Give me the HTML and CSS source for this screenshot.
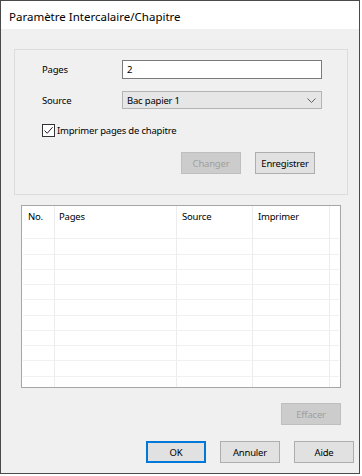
FILE: index.html
```html
<!DOCTYPE html>
<html lang="fr">
<head>
    <meta charset="UTF-8">
    <title>Paramètre Intercalaire/Chapitre</title>
    <link rel="stylesheet" href="styles.css">
</head>
<body>

<div class="window">
    <div class="titlebar">Paramètre Intercalaire/Chapitre</div>

    <div class="content">
        <div class="group">
            <div class="field-row">
                <label class="field-label" for="pages">Pages</label>
                <input class="text-input" type="text" id="pages" value="2">
            </div>
            <div class="field-row source-row">
                <span class="field-label">Source</span>
                <div class="select">
                    <span>Bac papier 1</span>
                    <svg class="chevron" width="9" height="5" viewBox="0 0 9 5">
                        <path d="M0.5 0.5 L4.5 4.5 L8.5 0.5" fill="none" stroke="#606060" stroke-width="1"/>
                    </svg>
                </div>
            </div>
            <div class="check-row">
                <span class="checkbox">
                    <svg width="11" height="11" viewBox="0 0 11 11">
                        <path d="M1.5 5.5 L4.2 8.3 L9.6 2.2" fill="none" stroke="#222" stroke-width="1"/>
                    </svg>
                </span>
                <span>Imprimer pages de chapitre</span>
            </div>
            <div class="button-row">
                <button class="btn" disabled>Changer</button>
                <button class="btn">Enregistrer</button>
            </div>
        </div>

        <div class="list">
            <div class="list-row list-head">
                <div class="cell c-no">No.</div>
                <div class="cell c-pages">Pages</div>
                <div class="cell c-source">Source</div>
                <div class="cell c-print">Imprimer</div>
                <div class="cell c-rest"></div>
            </div>
            <div id="listBody"></div>
        </div>

        <div class="clear-row">
            <button class="btn" disabled>Effacer</button>
        </div>
    </div>

    <div class="footer">
        <button class="btn btn-default">OK</button>
        <button class="btn">Annuler</button>
        <button class="btn">Aide</button>
    </div>
</div>

<script>
    // Empty rows of the list view
    var listBody = document.getElementById('listBody');
    for (var i = 0; i < 11; i++) {
        var row = document.createElement('div');
        row.className = 'list-row';
        row.innerHTML = '<div class="cell c-no"></div><div class="cell c-pages"></div>' +
            '<div class="cell c-source"></div><div class="cell c-print"></div><div class="cell c-rest"></div>';
        listBody.appendChild(row);
    }
</script>

</body>
</html>
```

FILE: styles.css
```css
body {
    margin: 0;
    padding: 0;
    background: #ffffff;
    font-family: "Noto Sans", "Open Sans", sans-serif;
    font-size: 9.5px;
    letter-spacing: -0.2px;
    color: #000;
}

.window {
    width: 360px;
    height: 474px;
    box-sizing: border-box;
    border: 1px solid #4a4a4a;
    background-color: #f0f0f0;
    display: flex;
    flex-direction: column;
}

.titlebar {
    height: 28px;
    box-sizing: border-box;
    background: #fff;
    padding: 3px 0 0 8px;
    font-size: 11.5px;
    letter-spacing: 0;
    line-height: 25px;
}

.content {
    padding: 20px 11px 0 13px;
    display: flex;
    flex-direction: column;
}

.group {
    border: 1px solid #dcdcdc;
    padding: 10px 25px 20px 27px;
}

.field-row {
    display: flex;
    align-items: center;
}

.source-row {
    margin-top: 12px;
}

.field-label {
    width: 80px;
}

.text-input {
    width: 200px;
    height: 19px;
    box-sizing: border-box;
    border: 1px solid #7a7a7a;
    background: #fff;
    font: inherit;
    letter-spacing: inherit;
    padding: 0 4px;
    margin: 0;
    outline: none;
}

.select {
    width: 200px;
    height: 18px;
    box-sizing: border-box;
    border: 1px solid #b4b4b4;
    background: #e6e6e6;
    display: flex;
    align-items: center;
    justify-content: space-between;
    padding: 0 5px 0 4px;
}

.check-row {
    margin-top: 15px;
    display: flex;
    align-items: center;
    gap: 2px;
    height: 13px;
}

.checkbox {
    width: 13px;
    height: 13px;
    box-sizing: border-box;
    border: 1px solid #333;
    background: #fff;
    display: flex;
}

.button-row {
    margin: 15px 7px 0 0;
    display: flex;
    justify-content: flex-end;
    gap: 14px;
}

.btn {
    width: 60px;
    height: 22px;
    box-sizing: border-box;
    border: 1px solid #adadad;
    background: #e1e1e1;
    font: inherit;
    letter-spacing: inherit;
    color: #000;
    padding: 0;
    margin: 0;
}

.btn:disabled {
    background: #cccccc;
    border-color: #bfbfbf;
    color: #a0a0a0;
}

.btn-default {
    border: 2px solid #0078d7;
}

.list {
    margin: 10px 7px 0 7px;
    height: 183px;
    box-sizing: border-box;
    border: 1px solid #a6a6a6;
    background: #fff;
    overflow: hidden;
}

.list-row {
    display: flex;
    height: 15.27px;
    box-sizing: border-box;
    border-bottom: 1px solid #f0f0f0;
    margin: 0 1px;
}

.list-head {
    height: 18px;
    border-bottom: none;
}

.list-head .cell {
    padding-top: 2px;
}

.cell {
    box-sizing: border-box;
    border-right: 1px solid #ececec;
    padding-left: 5px;
    line-height: 18px;
}

.c-no { width: 32px; }
.c-pages { width: 122px; padding-left: 4px; }
.c-source { width: 76px; }
.c-print { width: 77px; }
.c-rest { flex: 1; border-right: none; }

.clear-row {
    margin: 15px 7px 0 0;
    display: flex;
    justify-content: flex-end;
}

.footer {
    margin-top: 16px;
    padding-right: 5px;
    display: flex;
    justify-content: flex-end;
    gap: 14px;
}
```
